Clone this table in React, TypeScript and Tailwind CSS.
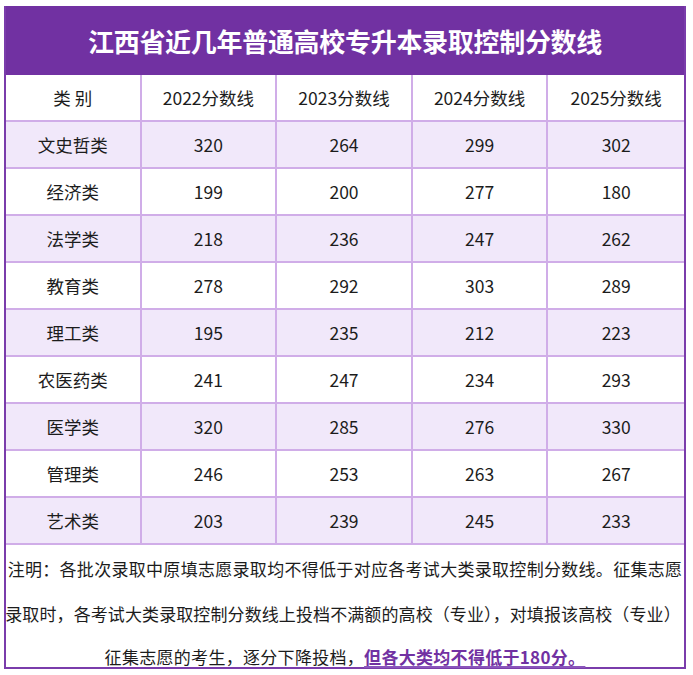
const rows = [
  { name: "文史哲类", scores: [320, 264, 299, 302] },
  { name: "经济类", scores: [199, 200, 277, 180] },
  { name: "法学类", scores: [218, 236, 247, 262] },
  { name: "教育类", scores: [278, 292, 303, 289] },
  { name: "理工类", scores: [195, 235, 212, 223] },
  { name: "农医药类", scores: [241, 247, 234, 293] },
  { name: "医学类", scores: [320, 285, 276, 330] },
  { name: "管理类", scores: [246, 253, 263, 267] },
  { name: "艺术类", scores: [203, 239, 245, 233] },
];

const headers = ["类 别", "2022分数线", "2023分数线", "2024分数线", "2025分数线"];

const font = { fontFamily: '"Noto Sans CJK SC", "Noto Sans", sans-serif' };

function Row({ cells, shaded }: { cells: (string | number)[]; shaded: boolean }) {
  return (
    <div
      className={`grid grid-cols-5 h-[47px] border-b-2 border-[#d0ade8] ${
        shaded ? "bg-[#f1e8fa]" : "bg-white"
      }`}
    >
      {cells.map((c, i) => (
        <div
          key={i}
          className={`flex items-center justify-center pt-[1px] text-[17.5px] text-[#1c1c1c] ${
            i < 4 ? "border-r-2 border-[#d0ade8]" : ""
          }`}
        >
          {c}
        </div>
      ))}
    </div>
  );
}

export default function App() {
  return (
    <div className="w-[693px] h-[675px] bg-white pt-[6px] pl-[4px]" style={font}>
      <div className="w-[682px] border-x-2 border-b-2 border-[#7a3cab]">
        <div className="h-[69px] bg-[#7131a2] flex items-center justify-center">
          <h1 className="text-white text-[26px] font-bold tracking-[-0.3px] -mt-[1px]">
            江西省近几年普通高校专升本录取控制分数线
          </h1>
        </div>
        <Row cells={headers} shaded={false} />
        {rows.map((r, i) => (
          <Row key={r.name} cells={[r.name, ...r.scores]} shaded={i % 2 === 0} />
        ))}
        <div className="h-[122px] pt-[1px] text-[17px] tracking-[0.3px] leading-[45px] text-[#1c1c1c] text-center whitespace-nowrap">
          <div>注明：各批次录取中原填志愿录取均不得低于对应各考试大类录取控制分数线。征集志愿</div>
          <div className="-ml-[4px] tracking-[0.1px]">
            录取时，各考试大类录取控制分数线上投档不满额的高校（专业），对填报该高校（专业）
          </div>
          <div className="-mt-[2px]">
            征集志愿的考生，逐分下降投档，
            <span className="font-bold text-[#7131a2] underline decoration-2 underline-offset-[2px] decoration-[#8a55bb]">
              但各大类均不得低于180分。
            </span>
          </div>
        </div>
      </div>
    </div>
  );
}
